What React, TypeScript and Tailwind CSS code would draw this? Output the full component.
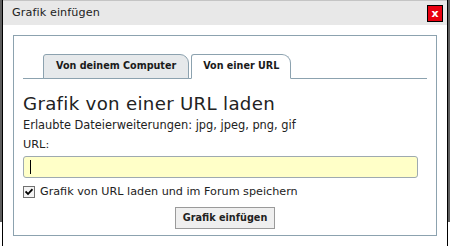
import { useState } from "react";

const font = { fontFamily: '"DejaVu Sans", Verdana, sans-serif' };

function Tab({ label, active }: { label: string; active?: boolean }) {
  return (
    <div
      className={
        "relative -mb-px flex h-[25px] items-center rounded-tl-[3px] rounded-tr-[9px] border border-[#8ca2af] text-[9.6px] font-bold text-[#1a1a1a] " +
        (active ? "border-b-white bg-white px-[11px]" : "bg-[#e6e9eb] px-[12px]")
      }
    >
      {label}
    </div>
  );
}

export default function App() {
  const [url, setUrl] = useState("");
  const [keep, setKeep] = useState(true);

  return (
    <div className="flex h-[246px] w-[450px] overflow-hidden bg-white text-[#222]" style={font}>
      {/* left window edge */}
      <div className="flex w-[2px] flex-col">
        <div className="h-[222px] bg-[#5e5e5e]" />
      </div>
      <div className="w-px bg-black" />

      <div className="flex flex-1 flex-col">
        <div className="flex h-[25px] items-center justify-between border-t border-[#c4c4c4] bg-[#e8e8e8] pl-[9px] pr-[4px]">
          <span className="text-[11.2px] tracking-[0.1px] text-[#222]">Grafik einfügen</span>
          <button className="flex h-[17px] w-[16px] items-center justify-center border border-black bg-[#e8000f] text-[11px] font-bold leading-none text-white">
            x
          </button>
        </div>

        <div className="mx-[10px] mt-[10px] h-[201px] border border-[#8ca2af] px-[9px] pt-[18px]">
          <div className="flex gap-[2px] border-b border-[#8ca2af] pl-[20px]">
            <Tab label="Von deinem Computer" />
            <Tab label="Von einer URL" active />
          </div>

          <h2 className="mt-[14px] text-[18.2px] leading-[22px] tracking-[0.3px] text-[#222]">
            Grafik von einer URL laden
          </h2>
          <p className="mt-[3px] text-[11.4px] leading-[14px]">
            Erlaubte Dateierweiterungen: jpg, jpeg, png, gif
          </p>
          <label className="mt-[6px] block text-[11.3px] leading-[14px]">URL:</label>
          <div className="mr-[9px] mt-[4px] flex h-[22px] items-center rounded-[3px] border border-[#9eaab0] bg-[#ffffc8] pl-[6px]">
            <div className="h-[14px] w-px bg-black" />
            <input
              value={url}
              onChange={(e) => setUrl(e.target.value)}
              className="h-full flex-1 bg-transparent text-[11px] outline-none"
            />
          </div>
          <label className="mt-[7px] flex items-center gap-[5px] text-[11.2px] leading-[14px]">
            <span
              onClick={() => setKeep(!keep)}
              className="flex h-[12px] w-[12px] items-center justify-center border border-[#707070] bg-[#f4f4f4]"
            >
              {keep && (
                <svg width="8" height="8" viewBox="0 0 8 8">
                  <path d="M0.5 3.5 L3 6 L7.5 1.2" stroke="#000" strokeWidth="1.8" fill="none" />
                </svg>
              )}
            </span>
            Grafik von URL laden und im Forum speichern
          </label>
          <div className="mt-[8px] flex justify-center">
            <button className="h-[22px] border border-[#9a9a9a] bg-[#efefef] px-[7px] text-[9.7px] font-bold text-[#222]">
              Grafik einfügen
            </button>
          </div>
        </div>
      </div>

      {/* right window edge */}
      <div className="w-px bg-black" />
      <div className="flex w-[2px] flex-col">
        <div className="h-[222px] bg-[#5e5e5e]" />
      </div>
    </div>
  );
}
